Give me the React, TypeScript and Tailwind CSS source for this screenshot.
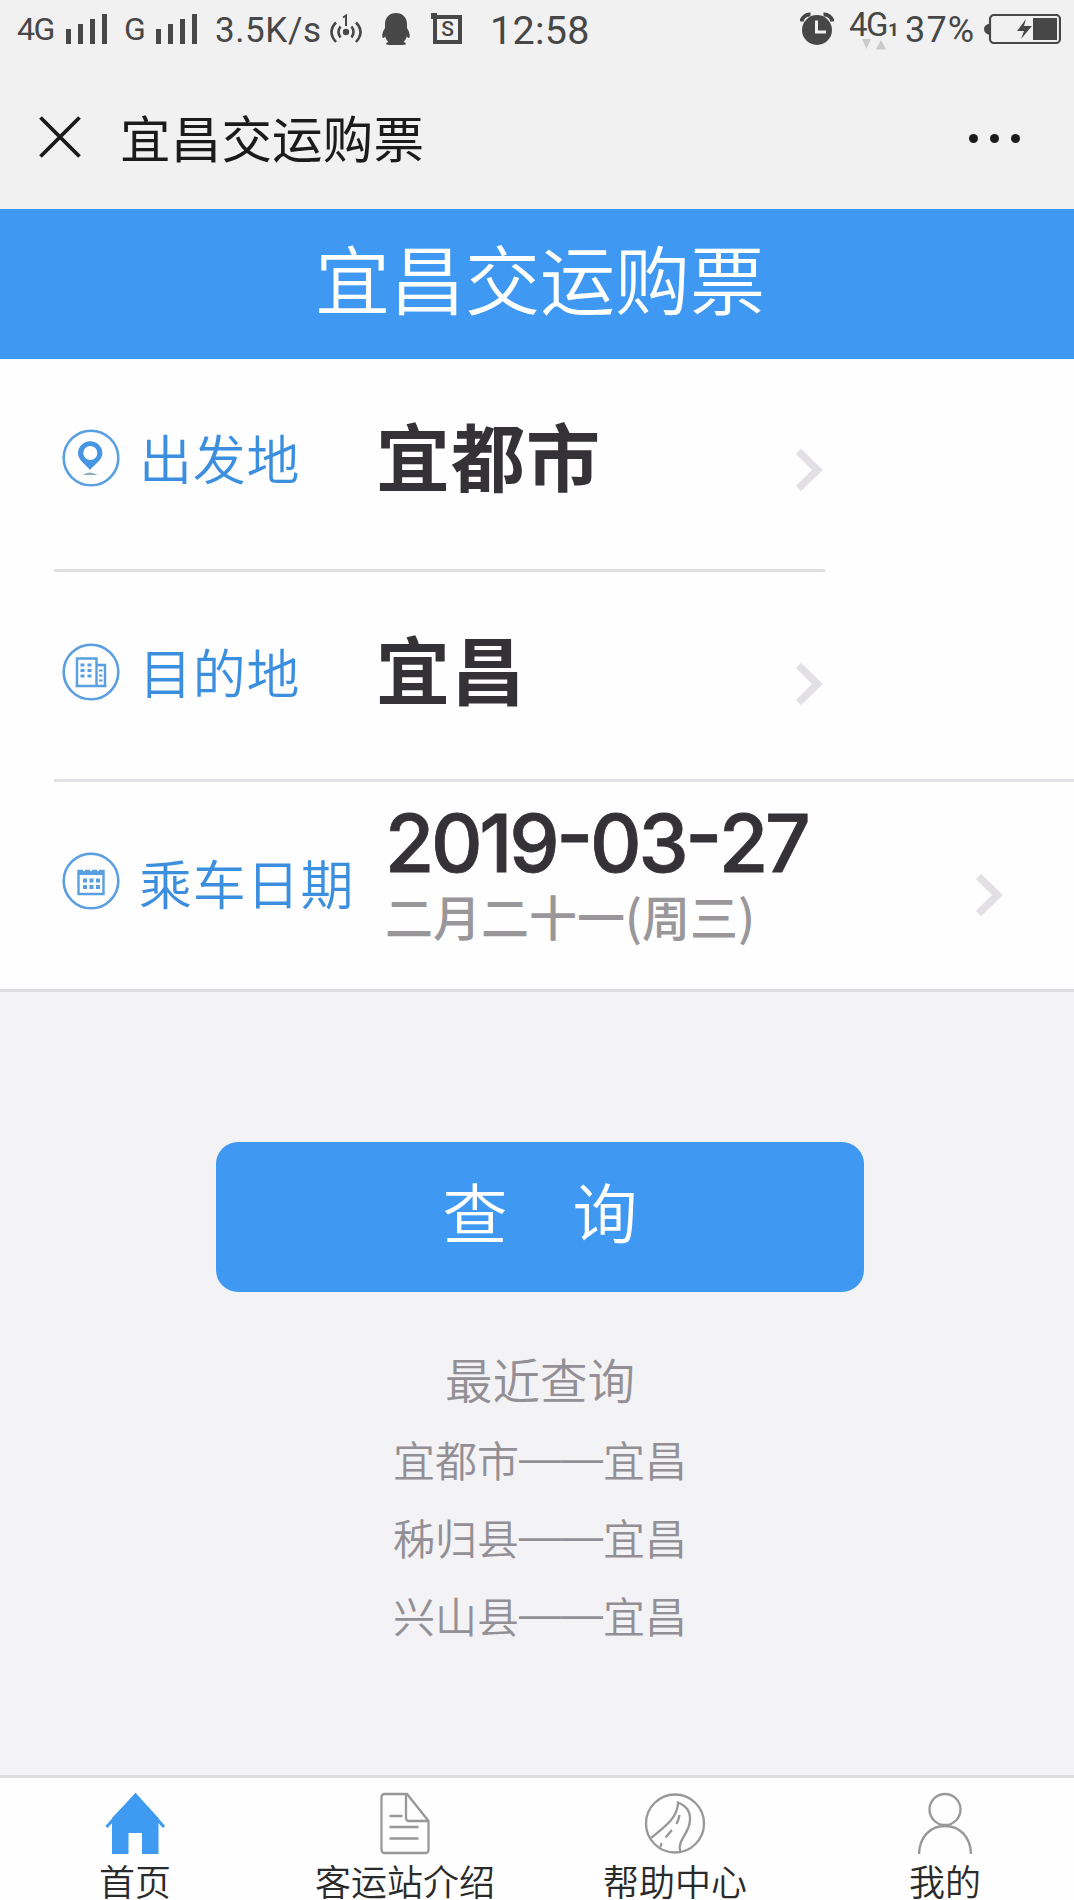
import type { ReactNode } from 'react';

const recentSearches = [
  { from: '宜都市', to: '宜昌' },
  { from: '秭归县', to: '宜昌' },
  { from: '兴山县', to: '宜昌' },
];

function SignalBars({ className }: { className: string }) {
  return (
    <div className={`flex h-[30px] w-[41px] items-end gap-[7px] ${className}`}>
      <span className="h-[15px] w-[5px] bg-[#474747]" />
      <span className="h-5 w-[5px] bg-[#474747]" />
      <span className="h-[25px] w-[5px] bg-[#474747]" />
      <span className="h-[30px] w-[5px] bg-[#474747]" />
    </div>
  );
}

function StatusBar() {
  return (
    <div className="flex h-[60px] w-[1074px] items-start font-['Roboto',sans-serif] whitespace-nowrap text-[#474747]">
      <span className="mt-[13px] ml-[17px] w-[38px] text-[32px] leading-[32px] tracking-[-1.5px]">4G</span>
      <SignalBars className="mt-[14px] ml-[11px]" />
      <span className="mt-[13px] ml-[17px] w-[22px] text-[32px] leading-[32px]">G</span>
      <SignalBars className="mt-[14px] ml-[10px]" />
      <span className="mt-[13px] ml-[18px] w-[108px] text-[35px] leading-[35px] tracking-[0.6px]">3.5K/s</span>
      <svg className="mt-[13px] ml-[6px]" width="34" height="32" viewBox="0 0 34 32" fill="none" stroke="#474747" strokeWidth="2.6">
        <circle cx="17" cy="19" r="3.2" fill="#474747" stroke="none" />
        <path d="M14 4.5 17 2.5V13" strokeWidth="2" />
        <path d="M11.5 13.5Q7.5 19 11.5 24.5M22.5 13.5Q26.5 19 22.5 24.5" />
        <path d="M7 9.5Q-2 19 7 29M27 9.5Q36 19 27 29" />
      </svg>
      <svg className="mt-[13px] ml-[19px]" width="28" height="32" viewBox="0 0 28 32" fill="#474747">
        <path d="M14 0C7.5 0 3 4.5 3 11v4C1 18 .3 20.5.3 23c0 1.6.5 2.2 1.2 1.9.8-.3 1.2-.7 1.7-1.4.6 2.200 1.700 4 3.200 5.400-1.300.4-2.200 1.100-2.200 2 0 .8 2.300 1.100 5.300 1.100h9c3 0 5.300-.3 5.300-1.100 0-.9-.9-1.600-2.200-2 1.500-1.400 2.600-3.200 3.200-5.400.5.7.9 1.100 1.700 1.400.7.300 1.200-.3 1.200-1.900 0-2.500-.7-5-2.700-8v-4C25 4.500 20.500 0 14 0Z" />
      </svg>
      <div className="relative mt-[15px] ml-[23px] flex size-[29px] items-center justify-center border-4 border-[#474747] text-[21px] font-medium">
        <span className="absolute top-[-6px] left-[-6px] size-[6px] bg-[#474747]" />
        <span className="leading-none">S</span>
      </div>
      <span className="mt-[11px] ml-[28px] w-[104px] text-[39.5px] leading-[39px] tracking-[0.3px]">12:58</span>

      <svg className="mt-[12px] ml-[206px]" width="34" height="34" viewBox="0 0 34 34">
        <circle cx="17" cy="18" r="15" fill="#474747" />
        <path d="M1.5 9.5A8.5 8.5 0 0 1 10.5 2.5M32.5 9.5A8.5 8.5 0 0 0 23.5 2.5" fill="none" stroke="#474747" strokeWidth="4" />
        <path d="M16.5 8.5V20H26" fill="none" stroke="#f1f1f1" strokeWidth="3" />
      </svg>
      <div className="mt-[9px] ml-[15px] w-[56px]">
        <div className="flex items-baseline">
          <span className="w-[39px] text-[33px] leading-[32px] tracking-[-1.5px]">4G</span>
          <span className="text-[19px] leading-[18px] font-bold">1</span>
        </div>
        <svg className="-mt-0.5 ml-[13px]" width="24" height="11" viewBox="0 0 24 11" fill="#cacaca">
          <path d="M0 0h9L4.5 10zM14 10.5h10L19 1z" />
        </svg>
      </div>
      <span className="mt-[13px] w-[72px] text-[36px] leading-[35px] tracking-[1.2px]">37%</span>
      <svg className="mt-[14px] ml-[7px]" width="77" height="30" viewBox="0 0 77 30">
        <path d="M5 10H4q-4 1.5-4 5t4 5.5h1z" fill="#474747" />
        <rect x="6" y="1" width="70" height="28" rx="4" fill="none" stroke="#474747" strokeWidth="2.2" />
        <path d="M49 4h24v22H49z" fill="#474747" />
        <path d="M42 5 33 17h7l-3 8 11-13h-8z" fill="#474747" />
      </svg>
    </div>
  );
}

function NavBar() {
  return (
    <div className="flex h-[149px] w-[1074px] items-start">
      <svg className="mt-[56px] ml-[39px]" width="42" height="42" viewBox="0 0 42 42" stroke="#1b1b1b" strokeWidth="3.8">
        <path d="m1.5 1.5 39 39M40.5 1.5l-39 39" />
      </svg>
      <h1 className="mt-[46px] ml-[39px] text-[50.5px] leading-[60px] font-normal tracking-[0.2px] text-[#1b1b1b]">宜昌交运购票</h1>
      <div className="mt-[74px] mr-[54px] ml-auto flex gap-3">
        <span className="size-[9px] rounded-full bg-[#1b1b1b]" />
        <span className="size-[9px] rounded-full bg-[#1b1b1b]" />
        <span className="size-[9px] rounded-full bg-[#1b1b1b]" />
      </div>
    </div>
  );
}

function Chevron({ className }: { className: string }) {
  return (
    <svg className={`shrink-0 ${className}`} width="28" height="44" viewBox="0 0 28 44" fill="none" stroke="#e2e0e4" strokeWidth="7.5">
      <path d="M2.5 3.5 21.5 22 2.5 40.5" />
    </svg>
  );
}

function RoundIcon({ children }: { children: ReactNode }) {
  return (
    <svg className="shrink-0" width="58" height="58" viewBox="0 0 58 58" fill="none" stroke="#5a9fe0">
      <circle cx="29" cy="29" r="27.3" strokeWidth="2.6" />
      {children}
    </svg>
  );
}

function Label({ children }: { children: ReactNode }) {
  return (
    <span className="ml-[19px] w-[237px] shrink-0 pb-[2px] text-[53px] leading-[64px] font-[350] tracking-[0.8px] text-[#3c8fdf]">
      {children}
    </span>
  );
}

function PinIcon() {
  return (
    <RoundIcon>
      <path d="M28 41C24 36 16 31 16 24.5a12.2 12.2 0 0 1 24.4 0C40.4 31 32 36 28 41Z" fill="#4796e3" stroke="none" />
      <circle cx="28.3" cy="24" r="7" fill="#fff" stroke="none" />
      <path d="M20.5 46q7.5-5 15 0z" fill="#8daebb" stroke="none" />
    </RoundIcon>
  );
}

function BuildingIcon() {
  return (
    <RoundIcon>
      <path d="M15 43V15.5h19.5V43M34.5 22H43v21M13.5 43h31" strokeWidth="2.4" />
      <path d="M18.5 22h4M25.5 22h4M18.5 27.5h4M25.5 27.5h4M18.5 33h4M25.5 33h4" strokeWidth="3.2" />
      <path d="M37 27.5h3.5M37 32.5h3.5M37 37.5h3.5" strokeWidth="2" />
    </RoundIcon>
  );
}

function CalendarIcon() {
  return (
    <RoundIcon>
      <path d="M16.5 19h25v23h-25z" strokeWidth="2.4" />
      <path d="M16 18h26v5H16z" fill="#5a9fe0" stroke="none" />
      <path d="M22 15.5v3.5M29 15.5v3.5M36 15.5v3.5" stroke="#fff" strokeWidth="2" />
      <path d="M21 28.5h4M27.5 28.5h4M34 28.5h4M21 35h4M27.5 35h4M34 35h4" strokeWidth="4" />
    </RoundIcon>
  );
}

function PlaceRow({ icon, label, place }: { icon: ReactNode; label: string; place: string }) {
  return (
    <div className="flex w-[763px] items-center">
      {icon}
      <Label>{label}</Label>
      <span className="pb-[9px] text-[74px] leading-[80px] font-bold tracking-[1px] text-[#343236]">{place}</span>
      <Chevron className="mt-[24px] mr-px ml-auto" />
    </div>
  );
}

function DateDash() {
  return <span className="align-[9px] leading-none">-</span>;
}

function SearchForm() {
  return (
    <section className="h-[633px] border-b-[3px] border-[#dddce0] bg-[#fefefe] pl-[54px]">
      <div className="flex h-[213px] w-[771px] items-center border-b-[3px] border-[#e0dfe3] pb-[12px] pl-2">
        <PlaceRow icon={<PinIcon />} label="出发地" place="宜都市" />
      </div>
      <div className="flex h-[210px] items-center border-b-[3px] border-[#e2e1e5] pb-[8px] pl-2">
        <PlaceRow icon={<BuildingIcon />} label="目的地" place="宜昌" />
      </div>
      <div className="flex h-[207px] items-start pl-2">
        <div className="flex items-start pt-[70px]">
          <CalendarIcon />
          <div className="-mt-0.5 flex">
            <Label>乘车日期</Label>
          </div>
        </div>
        <div className="ml-[9px] shrink-0 pt-[12px] whitespace-nowrap">
          <p className="h-[80px] font-['Inter',sans-serif] text-[80px] leading-[80px] font-medium tracking-[-3.3px] text-[#343236] [-webkit-text-stroke:0.8px_#343236]">
            2019
            <DateDash />
            03
            <DateDash />
            27
          </p>
          <p className="mt-[11px] text-[48px] leading-[60px] font-medium text-[#999799]">二月二十一(周三)</p>
        </div>
        <Chevron className="mt-[91px] mr-[76px] ml-auto" />
      </div>
    </section>
  );
}

function Tab({ label, icon }: { label: string; icon: ReactNode }) {
  return (
    <a className="flex w-[270px] flex-col items-center pt-[14px]">
      <svg width="64" height="64" viewBox="0 0 64 64" fill="none" stroke="#99979a" strokeWidth="2.3">
        {icon}
      </svg>
      <span className="mt-[8px] text-[36px] leading-[32px] font-[350] text-[#2a2a2a]">{label}</span>
    </a>
  );
}

function TabBar() {
  return (
    <nav className="flex h-[125px] shrink-0 border-t-[3px] border-[#dddce0] bg-[#fefefe]">
      <Tab
        label="首页"
        icon={
          <>
            <path d="M32.5 1.5 9 26v36h16.5V41H39v21h16.5V26z" fill="#3f9af1" stroke="none" />
            <path d="M3.5 35 32.5 3 61 35" stroke="#3f9af1" strokeWidth="3" />
          </>
        }
      />
      <Tab
        label="客运站介绍"
        icon={
          <path d="M34 2H11.5a3 3 0 0 0-3 3v53a3 3 0 0 0 3 3h41a3 3 0 0 0 3-3V29zM33 2v24a3 3 0 0 0 3 3h19M16.5 24h13M16.5 35h29M16.5 46.5h29" />
        }
      />
      <Tab
        label="帮助中心"
        icon={
          <>
            <circle cx="32" cy="31.5" r="29" />
            <path d="M8 46C23 34 35 25 35 10.5c10 4 13.5 11 11.5 21C45 42 33.5 50 37.5 60" />
            <path d="M36.5 23c-.5 3-1.5 6-3 9M29 38l-6.5 7.5M17.5 55l1-4" />
          </>
        }
      />
      <Tab
        label="我的"
        icon={
          <>
            <circle cx="32" cy="17.5" r="15.5" />
            <path d="M6 62C6.5 45 17 34 32 34s25.5 11 26 28" />
          </>
        }
      />
    </nav>
  );
}

export default function App() {
  return (
    <div className="h-[1900px] w-[1074px] overflow-hidden bg-[#f1f1f1] font-['Noto_Sans_CJK_SC',sans-serif]">
      <StatusBar />
      <NavBar />
      <main className="flex h-[1691px] w-[1080px] flex-col bg-[#f3f2f5]">
        <header className="flex h-[150px] items-center justify-center bg-[#3f98f1] pb-[14px]">
          <h2 className="text-[75px] leading-[80px] font-[350] text-white">宜昌交运购票</h2>
        </header>
        <SearchForm />
        <div className="flex flex-1 flex-col items-center pt-[150px]">
          <button
            type="button"
            className="h-[150px] w-[648px] rounded-[22px] bg-[#3f98f1] pb-[15px] text-[65px] leading-[80px] font-[350] text-white"
          >
            查　询
          </button>
          <h3 className="mt-[57px] text-[47.5px] leading-[60px] font-[350] text-[#929094]">最近查询</h3>
          <ul className="mt-[11px] text-center text-[42px] leading-[78px] font-[350] text-[#929094]">
            {recentSearches.map((route) => (
              <li key={route.from} className="h-[78px]">
                {route.from}
                <span className="align-[5px] font-['Liberation_Sans',sans-serif] leading-none">——</span>
                {route.to}
              </li>
            ))}
          </ul>
        </div>
        <TabBar />
      </main>
    </div>
  );
}
